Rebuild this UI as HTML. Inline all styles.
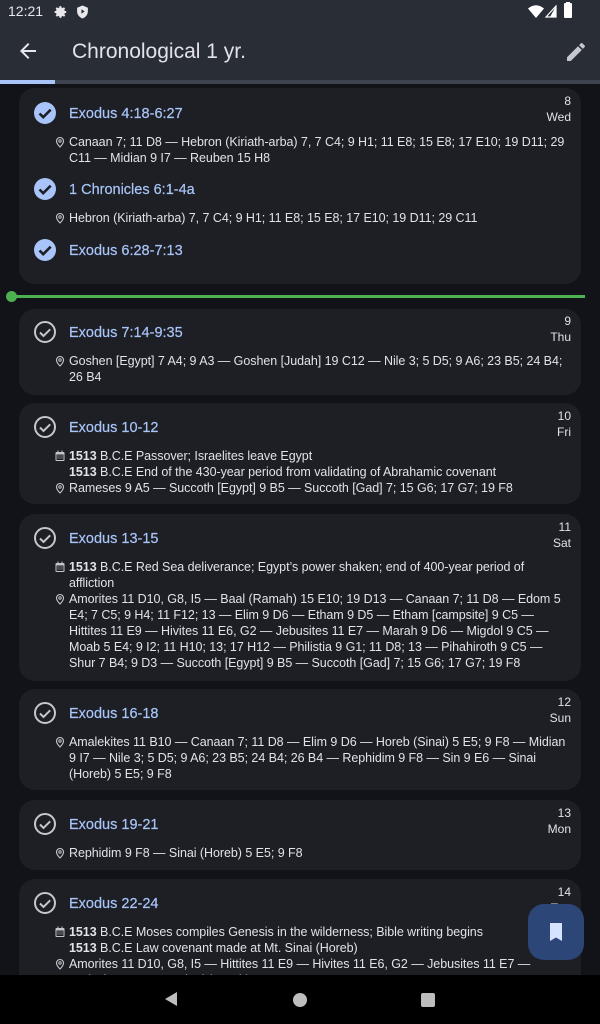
<!DOCTYPE html>
<html><head><meta charset="utf-8"><style>
*{margin:0;padding:0;box-sizing:border-box}
body{width:600px;height:1024px;overflow:hidden;background:#111318;font-family:"Liberation Sans",sans-serif;color:#e2e2e9;position:relative}
.abs{position:absolute}
.top{position:absolute;left:0;top:0;width:600px;height:80px;background:#292d36}
.card{position:absolute;left:19px;width:562px;background:#1d1f24;border-radius:16px}
.t{position:absolute;left:69px;font-size:14.5px;color:#a8c4f8;line-height:18px;white-space:nowrap;margin-top:1px;-webkit-text-stroke:0.2px #a8c4f8}
.l{position:absolute;left:69px;font-size:12.5px;line-height:16px;white-space:nowrap;color:#e2e2e9;letter-spacing:-0.05px;margin-top:1px}
.d{position:absolute;right:29px;font-size:12px;line-height:16px;text-align:right;color:#e2e2e9;margin-top:1px}
.ic{position:absolute;left:54px;margin-top:1px}
.ck{position:absolute;left:33px}
b{font-weight:bold}
</style></head><body>
<div class="top"></div>
<div class="abs" style="left:8px;top:3px;font-size:14px;color:#e8e8ec">12:21</div>
<svg class="abs" style="left:54px;top:5px" width="14" height="14" viewBox="0 0 24 24"><path fill="#e8e8ec" d="M12 8a4 4 0 100 8 4 4 0 000-8zm9 5.5v-3l-2.6-.5-.8-1.9 1.5-2.2-2.1-2.1-2.2 1.5-1.9-.8L12.5 2h-3l-.5 2.6-1.9.8-2.2-1.5-2.1 2.1 1.5 2.2-.8 1.9L1 10.5v3l2.6.5.8 1.9-1.5 2.2 2.1 2.1 2.2-1.5 1.9.8.5 2.6h3l.5-2.6 1.9-.8 2.2 1.5 2.1-2.1-1.5-2.2.8-1.9z"/></svg>
<svg class="abs" style="left:76px;top:5px" width="13" height="14" viewBox="0 0 24 26"><path fill="#e8e8ec" d="M12 1L2 5v7c0 6 4.5 11 10 13 5.5-2 10-7 10-13V5z"/><path fill="#292d36" d="M10 8l6 4-6 4z"/></svg>
<svg class="abs" style="left:528px;top:5px" width="16" height="13" viewBox="0 0 16 13"><path fill="#fff" d="M0 3.5Q8-3 16 3.5L8 13z"/></svg>
<svg class="abs" style="left:545px;top:5px" width="12" height="13" viewBox="0 0 12 13"><path fill="none" stroke="#fff" stroke-width="1.2" d="M11 1v11H1z"/><path fill="#fff" d="M11 1v11H5z"/></svg>
<div class="abs" style="left:564px;top:3px;width:8px;height:15px;background:#fff;border-radius:1px"></div>
<div class="abs" style="left:566px;top:2px;width:4px;height:2px;background:#fff"></div>
<svg class="abs" style="left:16px;top:39px" width="24" height="24" viewBox="0 0 24 24"><path fill="#e8e8ec" d="M20 11H7.8l5.6-5.6L12 4l-8 8 8 8 1.4-1.4L7.8 13H20z"/></svg>
<div class="abs" style="left:72px;top:40px;font-size:21px;color:#e2e2e9">Chronological 1 yr.</div>
<svg class="abs" style="left:564px;top:40px" width="24" height="24" viewBox="0 0 24 24"><path fill="#c4c6d0" d="M3 17.25V21h3.75L17.8 9.94l-3.75-3.75zM20.7 7.04a1 1 0 000-1.41l-2.34-2.34a1 1 0 00-1.41 0l-1.83 1.830 3.75 3.75z"/></svg>
<div class="abs" style="left:0;top:80px;width:600px;height:4px;background:#3e4350"></div>
<div class="abs" style="left:0;top:80px;width:55px;height:4px;background:#a8c4f8"></div>

<svg width="0" height="0" style="position:absolute"><defs>
<symbol id="cf" viewBox="0 0 24 24"><circle cx="12" cy="12" r="11" fill="#a8c4f8"/><path d="M6.5 12.5l3.7 3.7 7.5-7.5" fill="none" stroke="#1d1f24" stroke-width="2.6"/></symbol>
<symbol id="co" viewBox="0 0 24 24"><circle cx="12" cy="12" r="10" fill="none" stroke="#c6c6cc" stroke-width="2"/><path d="M7 12.5l3.5 3.5 6.7-6.7" fill="none" stroke="#c6c6cc" stroke-width="2"/></symbol>
<symbol id="pin" viewBox="0 0 24 24"><path fill="none" stroke="#c4c6d0" stroke-width="2.2" d="M12 22s-7-7-7-12a7 7 0 0114 0c0 5-7 12-7 12z"/><circle cx="12" cy="10" r="2.4" fill="none" stroke="#c4c6d0" stroke-width="2"/></symbol>
<symbol id="cal" viewBox="0 0 24 24"><rect x="3" y="4" width="18" height="18" rx="2" fill="#c4c6d0"/><rect x="5" y="9" width="14" height="11" fill="#1d1f24"/><path fill="#c4c6d0" d="M7 11h2v2H7zm4 0h2v2h-2zm4 0h2v2h-2zM7 15h2v2H7zm4 0h2v2h-2zm4 0h2v2h-2zM7 1h2v4H7zm8 0h2v4h-2z"/></symbol>
</defs></svg>

<!-- card 1 -->
<div class="card" style="top:88px;height:196px"></div>
<svg class="ck" style="top:101px" width="24" height="24"><use href="#cf"/></svg>
<div class="t" style="top:104px">Exodus 4:18-6:27</div>
<div class="d" style="top:92px">8<br>Wed</div>
<svg class="ic" style="top:135px" width="12" height="12"><use href="#pin"/></svg>
<div class="l" style="top:133px">Canaan 7; 11 D8 — Hebron (Kiriath-arba) 7, 7 C4; 9 H1; 11 E8; 15 E8; 17 E10; 19 D11; 29<br>C11 — Midian 9 I7 — Reuben 15 H8</div>
<svg class="ck" style="top:177px" width="24" height="24"><use href="#cf"/></svg>
<div class="t" style="top:180px">1 Chronicles 6:1-4a</div>
<svg class="ic" style="top:211px" width="12" height="12"><use href="#pin"/></svg>
<div class="l" style="top:209px">Hebron (Kiriath-arba) 7, 7 C4; 9 H1; 11 E8; 15 E8; 17 E10; 19 D11; 29 C11</div>
<svg class="ck" style="top:238px" width="24" height="24"><use href="#cf"/></svg>
<div class="t" style="top:241px">Exodus 6:28-7:13</div>

<div class="abs" style="left:11px;top:295px;width:574px;height:3px;background:#4cb050"></div>
<div class="abs" style="left:6px;top:291px;width:11px;height:11px;border-radius:50%;background:#4cb050"></div>

<!-- card 2 -->
<div class="card" style="top:309px;height:86px"></div>
<svg class="ck" style="top:320px" width="24" height="24"><use href="#co"/></svg>
<div class="t" style="top:323px">Exodus 7:14-9:35</div>
<div class="d" style="top:312px">9<br>Thu</div>
<svg class="ic" style="top:354px" width="12" height="12"><use href="#pin"/></svg>
<div class="l" style="top:352px">Goshen [Egypt] 7 A4; 9 A3 — Goshen [Judah] 19 C12 — Nile 3; 5 D5; 9 A6; 23 B5; 24 B4;<br>26 B4</div>

<!-- card 3 -->
<div class="card" style="top:403px;height:101px"></div>
<svg class="ck" style="top:415px" width="24" height="24"><use href="#co"/></svg>
<div class="t" style="top:418px">Exodus 10-12</div>
<div class="d" style="top:407px">10<br>Fri</div>
<svg class="ic" style="top:449px" width="12" height="12"><use href="#cal"/></svg>
<div class="l" style="top:447px"><b>1513</b> B.C.E Passover; Israelites leave Egypt<br><b>1513</b> B.C.E End of the 430-year period from validating of Abrahamic covenant</div>
<svg class="ic" style="top:481px" width="12" height="12"><use href="#pin"/></svg>
<div class="l" style="top:479px">Rameses 9 A5 — Succoth [Egypt] 9 B5 — Succoth [Gad] 7; 15 G6; 17 G7; 19 F8</div>

<!-- card 4 -->
<div class="card" style="top:514px;height:167px"></div>
<svg class="ck" style="top:526px" width="24" height="24"><use href="#co"/></svg>
<div class="t" style="top:529px">Exodus 13-15</div>
<div class="d" style="top:518px">11<br>Sat</div>
<svg class="ic" style="top:560px" width="12" height="12"><use href="#cal"/></svg>
<div class="l" style="top:558px"><b>1513</b> B.C.E Red Sea deliverance; Egypt’s power shaken; end of 400-year period of<br>affliction</div>
<svg class="ic" style="top:592px" width="12" height="12"><use href="#pin"/></svg>
<div class="l" style="top:590px">Amorites 11 D10, G8, I5 — Baal (Ramah) 15 E10; 19 D13 — Canaan 7; 11 D8 — Edom 5<br>E4; 7 C5; 9 H4; 11 F12; 13 — Elim 9 D6 — Etham 9 D5 — Etham [campsite] 9 C5 —<br>Hittites 11 E9 — Hivites 11 E6, G2 — Jebusites 11 E7 — Marah 9 D6 — Migdol 9 C5 —<br>Moab 5 E4; 9 I2; 11 H10; 13; 17 H12 — Philistia 9 G1; 11 D8; 13 — Pihahiroth 9 C5 —<br>Shur 7 B4; 9 D3 — Succoth [Egypt] 9 B5 — Succoth [Gad] 7; 15 G6; 17 G7; 19 F8</div>

<!-- card 5 -->
<div class="card" style="top:689px;height:101px"></div>
<svg class="ck" style="top:701px" width="24" height="24"><use href="#co"/></svg>
<div class="t" style="top:704px">Exodus 16-18</div>
<div class="d" style="top:693px">12<br>Sun</div>
<svg class="ic" style="top:735px" width="12" height="12"><use href="#pin"/></svg>
<div class="l" style="top:733px">Amalekites 11 B10 — Canaan 7; 11 D8 — Elim 9 D6 — Horeb (Sinai) 5 E5; 9 F8 — Midian<br>9 I7 — Nile 3; 5 D5; 9 A6; 23 B5; 24 B4; 26 B4 — Rephidim 9 F8 — Sin 9 E6 — Sinai<br>(Horeb) 5 E5; 9 F8</div>

<!-- card 6 -->
<div class="card" style="top:800px;height:70px"></div>
<svg class="ck" style="top:812px" width="24" height="24"><use href="#co"/></svg>
<div class="t" style="top:815px">Exodus 19-21</div>
<div class="d" style="top:804px">13<br>Mon</div>
<svg class="ic" style="top:846px" width="12" height="12"><use href="#pin"/></svg>
<div class="l" style="top:844px">Rephidim 9 F8 — Sinai (Horeb) 5 E5; 9 F8</div>

<!-- card 7 -->
<div class="card" style="top:879px;height:140px"></div>
<svg class="ck" style="top:891px" width="24" height="24"><use href="#co"/></svg>
<div class="t" style="top:894px">Exodus 22-24</div>
<div class="d" style="top:883px">14<br>Tue</div>
<svg class="ic" style="top:925px" width="12" height="12"><use href="#cal"/></svg>
<div class="l" style="top:923px"><b>1513</b> B.C.E Moses compiles Genesis in the wilderness; Bible writing begins<br><b>1513</b> B.C.E Law covenant made at Mt. Sinai (Horeb)</div>
<svg class="ic" style="top:957px" width="12" height="12"><use href="#pin"/></svg>
<div class="l" style="top:955px">Amorites 11 D10, G8, I5 — Hittites 11 E9 — Hivites 11 E6, G2 — Jebusites 11 E7 —<br>Perizzites 11 E7 — Sinai (Horeb) 5 E5; 9 F8</div>

<div class="abs" style="left:528px;top:904px;width:56px;height:56px;border-radius:16px;background:#2c4677"></div>
<svg class="abs" style="left:544px;top:920px" width="24" height="24" viewBox="0 0 24 24"><path fill="#d6e3ff" d="M6 3h12v18l-6-3.5L6 21z"/></svg>

<div class="abs" style="left:0;top:975px;width:600px;height:49px;background:#000"></div>
<svg class="abs" style="left:164px;top:991px" width="14" height="16" viewBox="0 0 14 16"><path fill="#bdbdbd" d="M13 1v14L1 8z"/></svg>
<div class="abs" style="left:293px;top:993px;width:14px;height:14px;border-radius:50%;background:#bdbdbd"></div>
<div class="abs" style="left:421px;top:993px;width:14px;height:14px;border-radius:2px;background:#bdbdbd"></div>
</body></html>
